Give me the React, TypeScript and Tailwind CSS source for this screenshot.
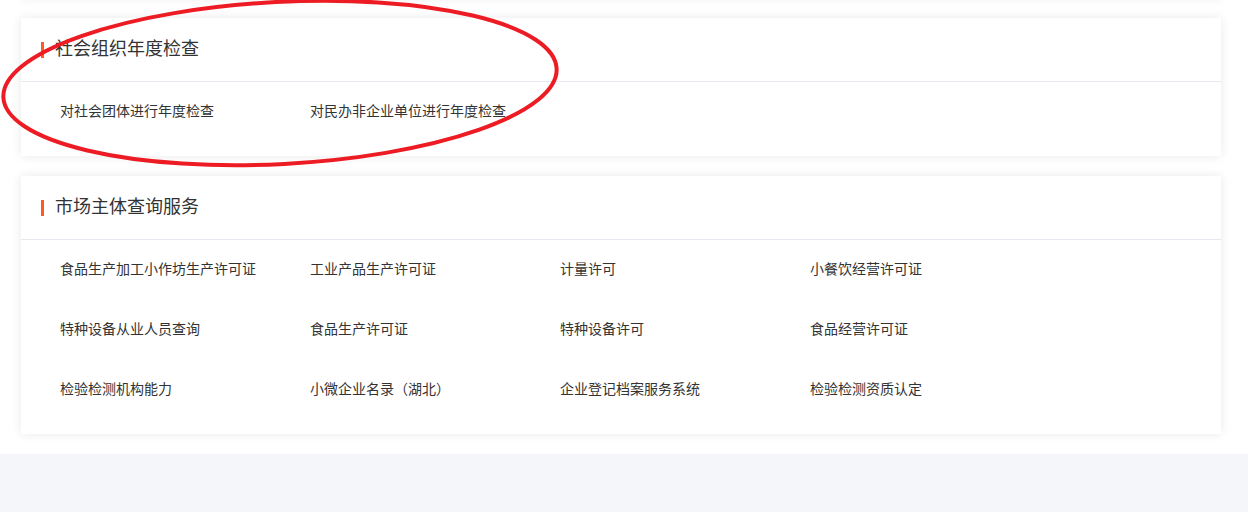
const groups = [
  {
    title: '社会组织年度检查',
    items: ['对社会团体进行年度检查', '对民办非企业单位进行年度检查'],
  },
  {
    title: '市场主体查询服务',
    items: [
      '食品生产加工小作坊生产许可证',
      '工业产品生产许可证',
      '计量许可',
      '小餐饮经营许可证',
      '特种设备从业人员查询',
      '食品生产许可证',
      '特种设备许可',
      '食品经营许可证',
      '检验检测机构能力',
      '小微企业名录（湖北）',
      '企业登记档案服务系统',
      '检验检测资质认定',
    ],
  },
];

function ServiceCard({ title, items }: { title: string; items: string[] }) {
  return (
    <div className="w-[1200px] ml-[21px] bg-white shadow-[0_0_10px_rgba(0,0,0,0.09)]">
      <div className="h-[64px] flex items-center pl-[20px] border-b border-[#e8e9f0]">
        <span className="w-[3px] h-[16px] bg-[#ff5a1f] mt-[1px]" />
        <h2 className="ml-[11px] pb-[6px] text-[18px] text-[#333] leading-none">{title}</h2>
      </div>
      <div className="pl-[39px] pb-[14px] grid grid-cols-[repeat(4,250px)]">
        {items.map((item) => (
          <div key={item} className="h-[60px] pb-[4px] flex items-center text-[14px] text-[#333]">
            {item}
          </div>
        ))}
      </div>
    </div>
  );
}

export default function App() {
  return (
    <div className="relative flex flex-col bg-white min-h-[512px] font-['Noto_Sans_CJK_SC','Noto_Sans',sans-serif]">
      <div className="w-[1200px] ml-[21px] h-[40px] -mt-[42px] shrink-0 bg-white shadow-[0_0_10px_rgba(0,0,0,0.09)]" />
      <div className="pt-[20px] flex flex-col gap-[20px]">
        {groups.map((g) => (
          <ServiceCard key={g.title} title={g.title} items={g.items} />
        ))}
      </div>
      <div className="mt-[20px] h-[58px] bg-[#f5f6fa]" />

      {/* hand-drawn annotation over the first card */}
      <svg className="absolute left-0 top-0 pointer-events-none" width="600" height="180">
        <ellipse
          cx="280"
          cy="83"
          rx="277"
          ry="81"
          fill="none"
          stroke="#ed1c24"
          strokeWidth="4"
          transform="rotate(-3 280 83)"
        />
      </svg>
    </div>
  );
}
